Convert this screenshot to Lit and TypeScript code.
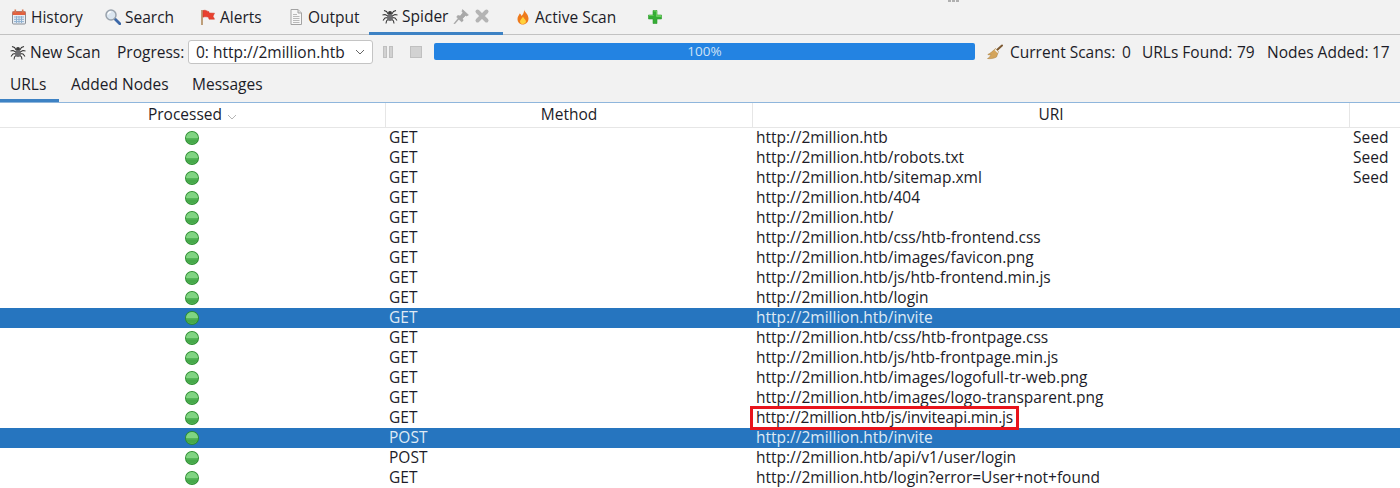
import { LitElement, css, html, svg } from 'lit';
import { customElement } from 'lit/decorators.js';

interface SpiderRow {
  method: string;
  uri: string;
  flag?: string;
  selected?: boolean;
  marked?: boolean;
}

const BASE = 'http://2million.htb';

const ROWS: SpiderRow[] = [
  { method: 'GET', uri: BASE, flag: 'Seed' },
  { method: 'GET', uri: `${BASE}/robots.txt`, flag: 'Seed' },
  { method: 'GET', uri: `${BASE}/sitemap.xml`, flag: 'Seed' },
  { method: 'GET', uri: `${BASE}/404` },
  { method: 'GET', uri: `${BASE}/` },
  { method: 'GET', uri: `${BASE}/css/htb-frontend.css` },
  { method: 'GET', uri: `${BASE}/images/favicon.png` },
  { method: 'GET', uri: `${BASE}/js/htb-frontend.min.js` },
  { method: 'GET', uri: `${BASE}/login` },
  { method: 'GET', uri: `${BASE}/invite`, selected: true },
  { method: 'GET', uri: `${BASE}/css/htb-frontpage.css` },
  { method: 'GET', uri: `${BASE}/js/htb-frontpage.min.js` },
  { method: 'GET', uri: `${BASE}/images/logofull-tr-web.png` },
  { method: 'GET', uri: `${BASE}/images/logo-transparent.png` },
  { method: 'GET', uri: `${BASE}/js/inviteapi.min.js`, marked: true },
  { method: 'POST', uri: `${BASE}/invite`, selected: true },
  { method: 'POST', uri: `${BASE}/api/v1/user/login` },
  { method: 'GET', uri: `${BASE}/login?error=User+not+found` },
];

const icon = (body: unknown, size = 16) => html`<svg
  class="ico"
  width=${size}
  height=${size}
  viewBox="0 0 16 16"
>
  ${body}
</svg>`;

const calendarIcon = icon(svg`
  <rect x="1.5" y="2.5" width="13" height="12.5" rx="1" fill="#e8eef5" stroke="#8a8f96"/>
  <rect x="1.5" y="2.5" width="13" height="3.5" fill="#e2603f"/>
  <rect x="3.5" y="0.5" width="1.6" height="3.5" fill="#d8744f"/>
  <rect x="10.9" y="0.5" width="1.6" height="3.5" fill="#d8744f"/>
  <path d="M3 8h10M3 10.3h10M3 12.6h10M5.5 7v7M8 7v7M10.5 7v7" stroke="#8fb0cf" stroke-width="1"/>
`);

const searchIcon = icon(svg`
  <path d="M10 10 14.800 14.800" stroke="#3c68a8" stroke-width="2.800" stroke-linecap="round"/>
  <circle cx="6" cy="6" r="5" fill="#dbe6f0" stroke="#9aa3ad" stroke-width="1.500"/>
  <path d="M3 5.500a3.200 3.200 0 0 1 3.200-2.700" stroke="#fff" stroke-width="1.200" fill="none"/>
`);

const flagIcon = icon(svg`
  <path d="M2 1v15" stroke="#b08a5c" stroke-width="1.600"/>
  <path d="M3 1.500c3-1 4 .8 6 1.200l0 1.300 5.500 .2-1.500 3 1.500 3-5.500 0-.5-2c-2-.5-3.500-.7-5.500 0z" fill="#e8412f" stroke="#d0301f" stroke-width=".5"/>
`);

const pageIcon = icon(svg`
  <path d="M3 .5h7l3.500 3.500v11.500H3z" fill="#f7f7f7" stroke="#a3a3a3"/>
  <path d="M10 .5V4h3.500" fill="#e2e2e2" stroke="#a3a3a3"/>
  <path d="M5 5.500h4M5 7.500h6.500M5 9.500h6.500M5 11.500h6.500M5 13.500h6.500" stroke="#b9b9b9"/>
`);

const spiderIcon = icon(svg`
  <g stroke="#333" stroke-width="1.050" fill="none">
    <path d="M6.500 6.500 4.500 3.500 2 2.500M9.500 6.500 11.500 3.500 14 2.500"/>
    <path d="M6 8 3 6.500 .5 7M10 8 13 6.500 15.500 7"/>
    <path d="M6 9.500 3 10 1 12.500M10 9.500 13 10 15 12.500"/>
    <path d="M6.500 11 4.500 13 4 15.500M9.500 11 11.500 13 12 15.500"/>
  </g>
  <circle cx="8" cy="5" r="2" fill="#3a3a3a"/>
  <ellipse cx="8" cy="9.500" rx="3" ry="3.600" fill="#6d6d70"/>
`);

const pinIcon = icon(
  svg`
  <g fill="#a9a9a9" stroke="#9a9a9a" stroke-width=".5">
    <path d="M9 1.500 14.500 6.500 12.800 7.500 11.800 7 9 9.800 9.500 12 8 13 3.500 8.500 4.500 7 6.800 7.500 9.300 4.500 8.500 3.200z"/>
    <path d="M5.500 10.500 1.500 15 1 14.500 4.800 9.800z"/>
  </g>
`,
  17,
);

const closeIcon = icon(svg`
  <path d="M3.500 3.500 12.500 12.500M12.500 3.500 3.500 12.500" stroke="#b4b4b4" stroke-width="4" stroke-linecap="round"/>
`);

const flameIcon = icon(svg`
  <path d="M9 .5c.3 2.500 4.500 4.500 4.500 9 0 3.500-2.500 6-5.700 6S2.500 13 2.500 10c0-2.500 1.500-3.500 2.200-5.500 1 .5 1.500 1.500 1.700 2.500C8 5.500 9.500 3 9 .5z" fill="#ee7a1c"/>
  <path d="M8 7.500c.4 1.700 3 3 3 5 0 1.600-1.500 2.500-3 2.500s-3-1-3-2.600c0-1.700 2.400-3 3-4.900z" fill="#ffd23c"/>
`);

const plusIcon = icon(svg`
  <path d="M6 1.500h4v4.500h4.500v4H10v4.500H6V10H1.500V6H6z" fill="#35ad35" stroke="#2e9a2e" stroke-width=".6"/>
  <path d="M6.500 2h3v4.500H14v1H9.500V6.500M2 6.500h4.500" fill="none" stroke="#7ddc6c" stroke-width=".7"/>
`);

const broomIcon = icon(svg`
  <path d="M10 6 15 1.500" stroke="#7d5a33" stroke-width="2" stroke-linecap="round"/>
  <path d="M8.500 4.500 11.500 7.500 9.500 13C7 14.500 3 15 .5 14.500 2.500 13.500 3.500 12 4 10.500 2.500 11 1.500 11 .8 10.500 3 9.500 6 7 8.500 4.500z" fill="#d4a55c" stroke="#a67c3c" stroke-width=".5"/>
  <path d="M8 5.500l3 3" stroke="#eee" stroke-width="1.500"/>
`);

const statusDot = html`<svg class="dot" width="14" height="14" viewBox="0 0 14 14">
  <circle cx="7" cy="7" r="7" fill="#2c8c30" />
  <circle cx="7" cy="7" r="6" fill="#56b85a" />
  <path d="M1 7a6 6 0 0 1 12 0z" fill="#80d482" />
  <path d="M1.400 8.500h11.200a6 6 0 0 1-11.200 0z" fill="#46a84a" />
</svg>`;

@customElement('app-root')
export class AppRoot extends LitElement {
  static override styles = css`
    :host {
      display: block;
      width: 1400px;
      height: 488px;
      overflow: hidden;
      background: #f2f2f2;
      color: #1c1c28;
      font-family: 'Open Sans', 'Noto Sans', sans-serif;
      font-size: 15.5px;
    }
    .ico {
      flex: none;
      display: block;
    }
    .tabs {
      display: grid;
      grid-template-columns: 93px 95px 88px 93px 134px 130px auto;
      height: 35px;
      box-sizing: border-box;
      border-bottom: 1px solid #c2c2c2;
      position: relative;
    }
    .tab {
      display: flex;
      align-items: center;
      gap: 4px;
      padding: 0 0 0 12px;
      height: 34px;
      box-sizing: border-box;
    }
    .tab:first-child {
      padding-left: 11px;
    }
    .tab.active {
      height: 35px;
      padding: 0 0 0 13px;
      border-bottom: 3px solid #3d82c4;
    }
    .tab.add {
      padding-left: 14px;
    }
    .tab .pin {
      margin-left: 1px;
    }
    .grip {
      position: absolute;
      top: 0;
      left: 948px;
      width: 11px;
      height: 2px;
      background: repeating-linear-gradient(90deg, #b0b0b0 0 3px, transparent 3px 4px);
    }
    .toolbar {
      display: flex;
      align-items: center;
      height: 33px;
      padding-left: 10px;
    }
    .new-scan {
      display: flex;
      align-items: center;
      gap: 4px;
      width: 93px;
      margin-right: 14px;
    }
    .progress-label {
      width: 68px;
    }
    .combo {
      display: flex;
      align-items: center;
      justify-content: space-between;
      box-sizing: border-box;
      width: 185px;
      height: 24px;
      margin-left: 3px;
      padding: 0 7px;
      background: #fff;
      border: 1px solid #c4c4c4;
      border-radius: 3px;
    }
    .pause {
      display: flex;
      gap: 2px;
      margin-left: 10px;
    }
    .pause span {
      box-sizing: border-box;
      width: 4px;
      height: 12px;
      background: #d2d2d2;
      border: 1px solid #c0c0c0;
    }
    .stop {
      box-sizing: border-box;
      width: 12px;
      height: 12px;
      margin-left: 17px;
      background: #d2d2d2;
      border: 1px solid #c0c0c0;
    }
    .progress {
      width: 541px;
      height: 17px;
      margin-left: 12px;
      border-radius: 2px;
      background: #2383e2;
      color: #cfe2f5;
      font-size: 13.5px;
      line-height: 17px;
      text-align: center;
    }
    .stats {
      display: grid;
      grid-template-columns: 23px 112px 20px 95px 30px 105px auto;
      align-items: center;
      margin-left: 12px;
    }
    .subtabs {
      display: grid;
      grid-template-columns: 59px 121px auto;
      justify-content: start;
      height: 34px;
    }
    .subtab {
      display: flex;
      align-items: center;
      height: 34px;
      box-sizing: border-box;
      padding: 0 0 2px 12px;
      white-space: nowrap;
    }
    .subtab.active {
      padding: 1px 0 0 10px;
      border-bottom: 3px solid #3d82c4;
    }
    .table {
      border-top: 1px solid #8fb6dc;
      background: #fff;
    }
    .row {
      display: grid;
      grid-template-columns: 386px 367px 597px 50px;
      height: 20px;
      line-height: 19px;
    }
    .head {
      height: 25px;
      line-height: 23px;
      border-bottom: 1px solid #e6e6e6;
      box-sizing: border-box;
    }
    .head > div {
      text-align: center;
      border-right: 1px solid #e6e6e6;
      box-sizing: border-box;
    }
    .head > div:last-child {
      border-right: none;
    }
    .sort {
      display: inline-block;
      margin-left: 1px;
    }
    .cell {
      padding-left: 3px;
      white-space: nowrap;
    }
    .cell.state {
      display: flex;
      align-items: center;
      justify-content: center;
      padding: 0 2px 0 0;
    }
    .row.selected {
      background: #2675bf;
      color: #dfeaf5;
    }
    .marked {
      display: block;
      box-sizing: border-box;
      width: 263px;
      height: 18px;
      margin: 1px 0 0 -3px;
      padding-left: 3px;
      line-height: 17px;
      letter-spacing: -0.15px;
      outline: 3px solid #e8141c;
    }
  `;

  override render() {
    return html`
      <div class="tabs">
        <div class="tab">${calendarIcon}History</div>
        <div class="tab">${searchIcon}Search</div>
        <div class="tab">${flagIcon}Alerts</div>
        <div class="tab">${pageIcon}Output</div>
        <div class="tab active">
          ${spiderIcon}Spider<span class="pin">${pinIcon}</span
          ><span class="close">${closeIcon}</span>
        </div>
        <div class="tab">${flameIcon}Active Scan</div>
        <div class="tab add">${plusIcon}</div>
        <div class="grip"></div>
      </div>
      <div class="toolbar">
        <div class="new-scan">${spiderIcon}New Scan</div>
        <span class="progress-label">Progress:</span>
        <div class="combo">
          <span>0: http://2million.htb</span>
          <svg width="10" height="6" viewBox="0 0 10 6">
            <path d="M1 1l4 4 4-4" fill="none" stroke="#666" />
          </svg>
        </div>
        <div class="pause"><span></span><span></span></div>
        <div class="stop"></div>
        <div class="progress">100%</div>
        <div class="stats">
          ${broomIcon}<span>Current Scans:</span><span>0</span>
          <span>URLs Found:</span><span>79</span>
          <span>Nodes Added:</span><span>17</span>
        </div>
      </div>
      <div class="subtabs">
        <div class="subtab active">URLs</div>
        <div class="subtab">Added Nodes</div>
        <div class="subtab">Messages</div>
      </div>
      <div class="table">
        <div class="row head">
          <div>
            Processed
            <svg class="sort" width="10" height="6" viewBox="0 0 10 6">
              <path d="M1 1l4 4 4-4" fill="none" stroke="#b5b5b5" />
            </svg>
          </div>
          <div>Method</div>
          <div>URI</div>
          <div></div>
        </div>
        ${ROWS.map(
          (r) => html`
            <div class="row ${r.selected ? 'selected' : ''}">
              <div class="cell state">${statusDot}</div>
              <div class="cell">${r.method}</div>
              <div class="cell">
                ${r.marked ? html`<span class="marked">${r.uri}</span>` : r.uri}
              </div>
              <div class="cell">${r.flag ?? ''}</div>
            </div>
          `,
        )}
      </div>
    `;
  }
}

declare global {
  interface HTMLElementTagNameMap {
    'app-root': AppRoot;
  }
}
